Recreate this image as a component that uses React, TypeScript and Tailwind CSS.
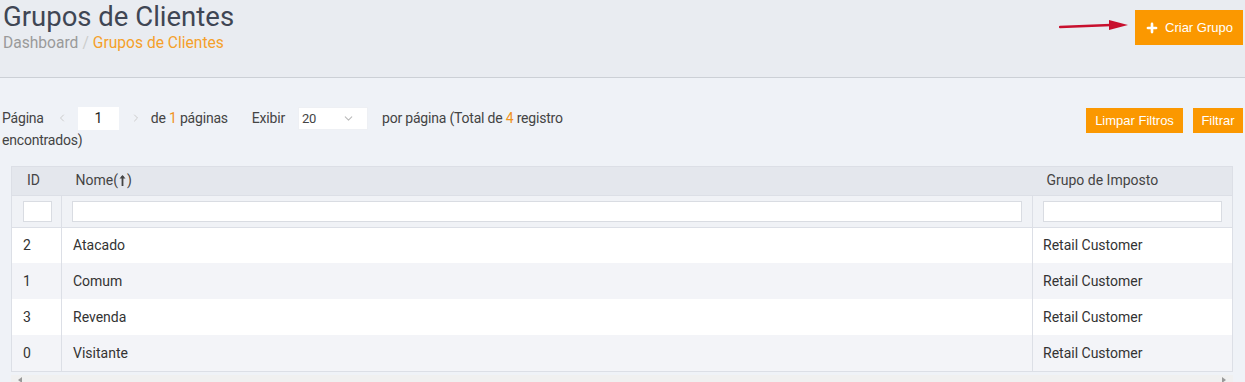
import { Plus, ChevronLeft, ChevronRight, ChevronDown } from "lucide-react";

const rows = [
  { id: "2", nome: "Atacado", grupo: "Retail Customer" },
  { id: "1", nome: "Comum", grupo: "Retail Customer" },
  { id: "3", nome: "Revenda", grupo: "Retail Customer" },
  { id: "0", nome: "Visitante", grupo: "Retail Customer" },
];

export default function App() {
  return (
    <div className="h-[382px] w-full overflow-hidden bg-[#eff2f7] font-['Roboto',sans-serif] text-[#444]">
      {/* page header */}
      <div className="flex h-[78px] justify-between border-b border-[#ccd0d6] bg-[#e9ecf1]">
        <div className="pl-[3px] pt-[1px]">
          <h1 className="text-[27.5px] leading-[32px] text-[#3f4654]">Grupos de Clientes</h1>
          <div className="mt-[1px] text-[15.6px] leading-[18px]">
            <span className="text-[#9a9a9a]">Dashboard</span>
            <span className="px-[4px] text-[#ccc]">/</span>
            <span className="text-[#f5a02a]">Grupos de Clientes</span>
          </div>
        </div>
        <div className="flex items-start pr-[2px] pt-[10px]">
          <svg width="72" height="16" viewBox="0 0 72 16" className="mr-[4px] mt-[8px]">
            <path d="M1 9 L52 7" stroke="#c8102e" strokeWidth="2.5" strokeLinecap="round" />
            <path d="M50 2 L69 7 L50 12 Z" fill="#c8102e" />
          </svg>
          <button className="flex h-[35px] w-[108px] items-center justify-center gap-[6px] bg-[#fb9800] font-['Liberation_Sans',sans-serif] text-[13px] text-white">
            <Plus size={14} strokeWidth={4.5} />
            Criar Grupo
          </button>
        </div>
      </div>

      {/* toolbar */}
      <div className="flex justify-between pl-[2px] pr-[2px] pt-[28px]">
        <div className="w-[590px] text-[14px] leading-[23px] tracking-[-0.2px] text-[#444]">
          <span className="inline-flex items-center align-middle">
            Página
            <ChevronLeft size={12} className="ml-[12px] text-[#ccc]" />
            <span className="ml-[10px] inline-block h-[23px] w-[41px] bg-white text-center text-[#222]">1</span>
            <ChevronRight size={12} className="ml-[11px] text-[#ccc]" />
            <span className="ml-[9px]">
              de <span className="text-[#f0931e]">1</span> páginas
            </span>
            <span className="ml-[24px]">Exibir</span>
            <span className="ml-[13px] inline-flex h-[23px] w-[70px] items-center justify-between border border-[#eef0f4] bg-white pl-[3px] pr-[12px] text-[13px]">
              20
              <ChevronDown size={13} className="text-[#bbb]" />
            </span>
            <span className="ml-[14px]">
              por página (Total de <span className="text-[#f0931e]">4</span> registro
            </span>
          </span>
          <div className="-mt-[1px]">encontrados)</div>
        </div>
        <div className="flex gap-[10px] pt-[2px]">
          <button className="h-[25px] w-[97px] bg-[#fb9800] font-['Liberation_Sans',sans-serif] text-[13px] text-white">Limpar Filtros</button>
          <button className="h-[25px] w-[50px] bg-[#fb9800] font-['Liberation_Sans',sans-serif] text-[13px] text-white">Filtrar</button>
        </div>
      </div>

      {/* table */}
      <div className="mx-[11px] mt-[14px] w-[1222px]">
        <table className="w-full border-collapse border border-[#dcdfe6] text-[14px] text-[#333]">
          <thead>
            <tr className="h-[29px] bg-[#e4e7ed] text-[#444]">
              <th className="w-[50px] pl-[15px] text-left font-normal">ID</th>
              <th className="pl-[14px] text-left font-normal">
                <span className="inline-flex items-center">
                  Nome(
                  <svg width="7" height="13" viewBox="0 0 7 13" className="mx-[1px]">
                    <path d="M3.5 12 V2" stroke="#444" strokeWidth="1.8" />
                    <path d="M0.5 4.5 L3.5 1 L6.5 4.5 Z" fill="#444" />
                  </svg>
                  )
                </span>
              </th>
              <th className="w-[200px] pl-[14px] text-left font-normal">Grupo de Imposto</th>
            </tr>
            <tr className="h-[32px] border-y border-[#dcdfe6] bg-[#f0f2f6]">
              <td className="border-r border-[#dcdfe6] pl-[11px]">
                <div className="h-[21px] w-[29px] border border-[#d9dce2] bg-white" />
              </td>
              <td className="border-r border-[#dcdfe6] px-[10px]">
                <div className="h-[21px] w-full border border-[#d9dce2] bg-white" />
              </td>
              <td className="px-[10px]">
                <div className="h-[21px] w-full border border-[#d9dce2] bg-white" />
              </td>
            </tr>
          </thead>
          <tbody>
            {rows.map((r, i) => (
              <tr key={r.id} className={`h-[36px] ${i % 2 === 0 ? "bg-white" : "bg-[#f3f4f8]"}`}>
                <td className="border-r border-[#dcdfe6] pl-[11px]">{r.id}</td>
                <td className="border-r border-[#dcdfe6] pl-[11px]">{r.nome}</td>
                <td className="pl-[10px]">{r.grupo}</td>
              </tr>
            ))}
          </tbody>
        </table>
        <div className="mt-[3px] flex h-[10px] items-start justify-between bg-[#f0f0f0] px-[6px] pt-[2px]">
          <svg width="6" height="6" viewBox="0 0 6 6"><path d="M5 0 L1 3 L5 6 Z" fill="#999" /></svg>
          <svg width="6" height="6" viewBox="0 0 6 6"><path d="M1 0 L5 3 L1 6 Z" fill="#999" /></svg>
        </div>
      </div>
    </div>
  );
}
